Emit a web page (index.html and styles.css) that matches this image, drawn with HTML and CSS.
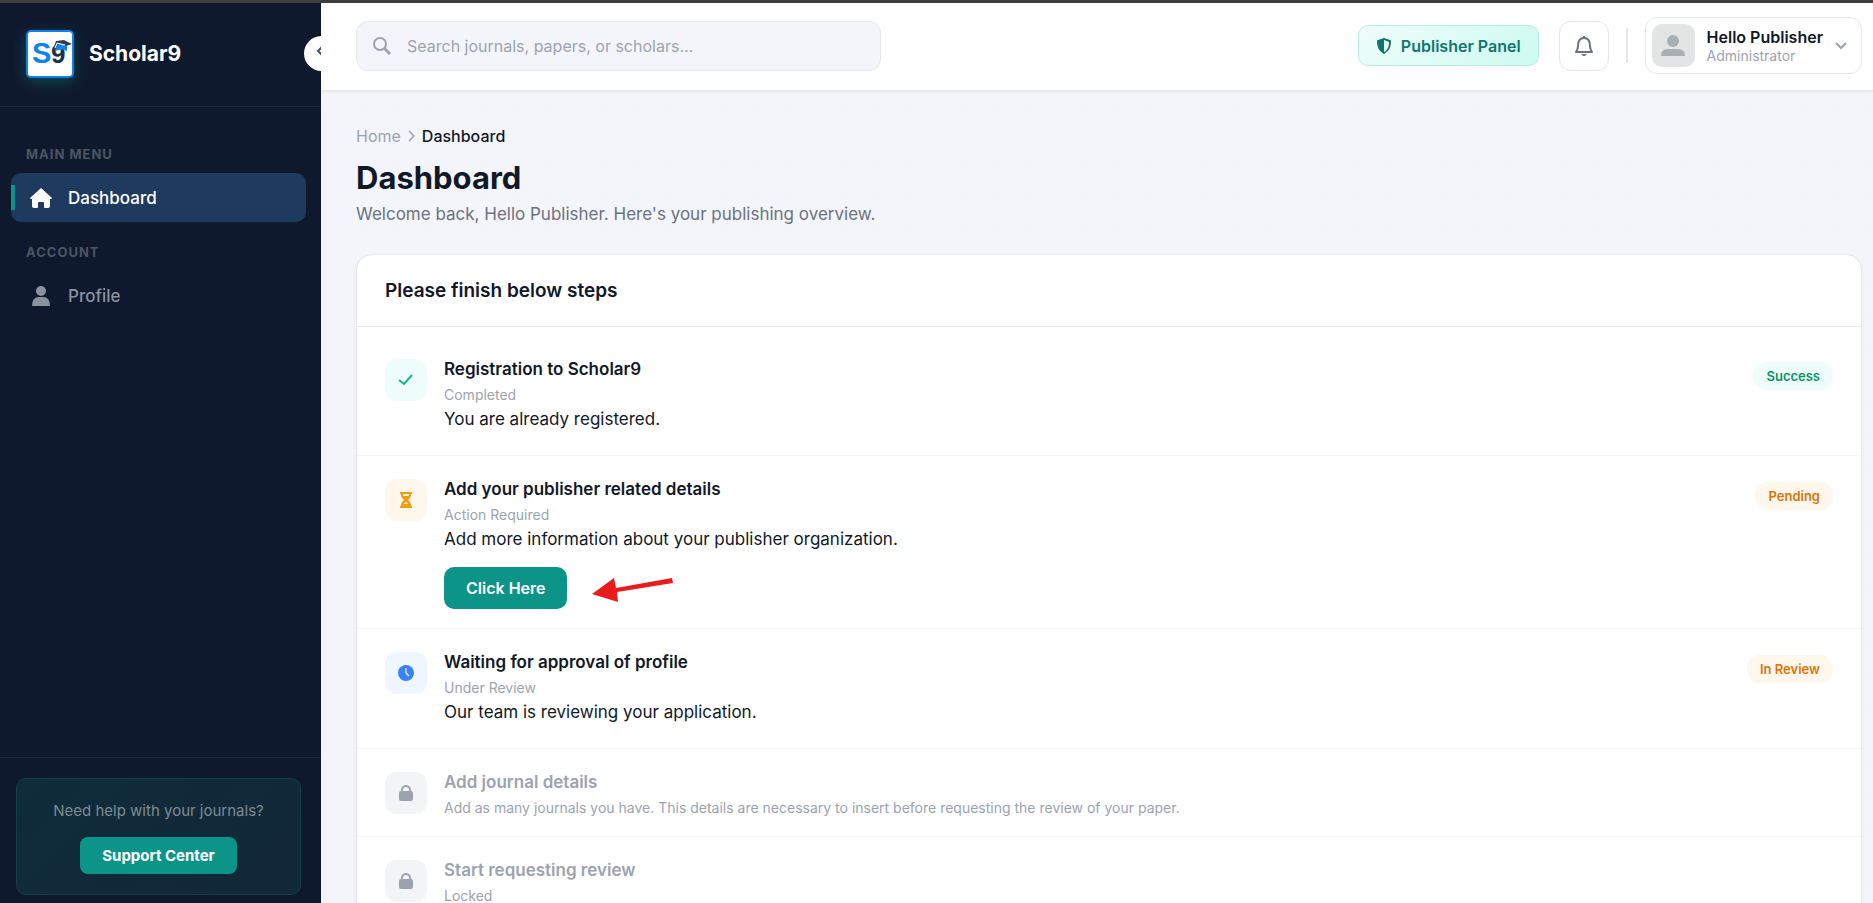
FILE: index.html
```
<!DOCTYPE html>
<html lang="en">
<head>
    <meta charset="UTF-8">
    <meta name="viewport" content="width=device-width, initial-scale=1.0">
    <title>Dashboard - Scholar9</title>
    <link rel="stylesheet" href="styles.css">
</head>
<body>
    <aside class="sidebar">
        <button class="sidebar-toggle" type="button" aria-label="Collapse menu">
            <svg width="8" height="12" viewBox="0 0 8 12"><path d="M6 2L2 6l4 4" fill="none" stroke="currentColor" stroke-width="2"/></svg>
        </button>
        <div class="brand">
            <div class="brand-logo">
                <svg width="44" height="44" viewBox="0 0 44 44">
                    <text x="4" y="31" class="logo-s">S</text>
                    <text x="23" y="31" class="logo-nine">9</text>
                    <path d="M28 11q5 3 11 3v5q-5-3-12 0z" fill="#0a84f0"/>
                    <path d="M25 17l3-8 8-1 8 4-6 2-8-2-2 1-1 6z" fill="#2c3e50"/>
                    <path d="M27 16l2-5 8 2" fill="none" stroke="#fff" stroke-width="1"/>
                </svg>
            </div>
            <span class="brand-name">Scholar9</span>
        </div>
        <nav class="menu">
            <div class="menu-label">Main Menu</div>
            <a href="#" class="menu-item active">
                <svg width="24" height="24" viewBox="0 0 24 24"><path d="M12 2L1 12q0 1 1 1h1v7q0 2 2 2h3q1 0 1-1v-4q0-1 1-1h4q1 0 1 1v4q0 1 1 1h3q2 0 2-2v-7h1q1 0 1-1z" fill="currentColor"/></svg>
                Dashboard
            </a>
            <div class="menu-label">Account</div>
            <a href="#" class="menu-item">
                <svg width="24" height="24" viewBox="0 0 24 24"><circle cx="12" cy="7" r="5" fill="currentColor"/><path d="M3 22q0-9 7-9h4q7 0 7 9z" fill="currentColor"/></svg>
                Profile
            </a>
        </nav>
        <div class="sidebar-footer">
            <div class="help-box">
                <p>Need help with your journals?</p>
                <button class="support-btn" type="button">Support Center</button>
            </div>
        </div>
    </aside>

    <div class="main">
        <header class="topbar">
            <label class="search">
                <svg width="18" height="18" viewBox="0 0 18 18" fill="none" stroke="currentColor" stroke-width="2"><circle cx="7" cy="7" r="6"/><path d="M11 11l6 6" stroke-width="3"/></svg>
                <input type="text" placeholder="Search journals, papers, or scholars..." aria-label="Search">
            </label>
            <div class="topbar-right">
                <button class="panel-btn" type="button">
                    <svg width="16" height="16" viewBox="0 0 16 16"><path fill-rule="evenodd" d="M8 0l6 2q1 0 1 1c0 6-2 10-7 13C3 13 1 9 1 3q0-1 1-1zM8 2v12c4-2 5-6 5-10z" fill="currentColor"/></svg>
                    Publisher Panel
                </button>
                <button class="bell-btn" type="button" aria-label="Notifications">
                    <svg width="20" height="22" viewBox="0 0 20 22"><path d="M10 1v2M2 17q2-3 2-6c0-5 2-8 6-8s6 3 6 8q0 3 2 6z" fill="none" stroke="currentColor" stroke-width="2" stroke-linejoin="round"/><path d="M7 19h6q-1 2-3 2t-3-2z" fill="currentColor"/></svg>
                </button>
                <span class="divider"></span>
                <button class="user" type="button">
                    <svg class="avatar" width="43" height="43" viewBox="0 0 43 43"><circle cx="21" cy="17" r="6" fill="#a9b0b3"/><path d="M9 32q0-7 7-7h10q7 0 7 7z" fill="#a9b0b3"/></svg>
                    <span class="user-info">
                        <span class="user-name">Hello Publisher</span>
                        <span class="user-role">Administrator</span>
                    </span>
                    <svg width="12" height="8" viewBox="0 0 12 8"><path d="M1 1l5 5 5-5" fill="none" stroke="#9ca3af" stroke-width="2"/></svg>
                </button>
            </div>
        </header>

        <main class="content">
            <div class="breadcrumb">
                <a href="#">Home</a>
                <svg width="7" height="12" viewBox="0 0 7 12"><path d="M1 1l5 5-5 5" fill="none" stroke="#9ca3af" stroke-width="1.5"/></svg>
                <span>Dashboard</span>
            </div>
            <h1>Dashboard</h1>
            <p class="subtitle">Welcome back, Hello Publisher. Here's your publishing overview.</p>

            <section class="card">
                <h2>Please finish below steps</h2>
                <div class="steps">
                    <div class="step">
                        <div class="step-icon green">
                            <svg width="16" height="14" viewBox="0 0 16 14"><path d="M1 7l5 4 8-9" fill="none" stroke="currentColor" stroke-width="2"/></svg>
                        </div>
                        <div class="step-body">
                            <h3>Registration to Scholar9</h3>
                            <div class="step-status">Completed</div>
                            <p>You are already registered.</p>
                        </div>
                        <span class="badge success">Success</span>
                    </div>
                    <div class="step">
                        <div class="step-icon orange">
                            <svg width="12" height="16" viewBox="0 0 12 16"><path fill-rule="evenodd" d="M0 0h12v2h-1c0 3-1 4-3 6 2 2 3 3 3 6h1v2H0v-2h1c0-3 1-4 3-6-2-2-3-3-3-6H0zM3 2q0 2 1 2h4q1 0 1-2zM4 12h4q-1-2-2-2t-2 2z" fill="currentColor"/></svg>
                        </div>
                        <div class="step-body">
                            <h3>Add your publisher related details</h3>
                            <div class="step-status">Action Required</div>
                            <p>Add more information about your publisher organization.</p>
                            <div class="step-action">
                                <button class="click-btn" type="button">Click Here</button>
                                <svg width="82" height="30" viewBox="0 -4 82 30"><path d="M1 17L23 1l2 10L81 1l1 5-56 9 1 10z" fill="#e81c1c"/></svg>
                            </div>
                        </div>
                        <span class="badge warning">Pending</span>
                    </div>
                    <div class="step">
                        <div class="step-icon blue">
                            <svg width="16" height="16" viewBox="0 0 16 16"><circle cx="8" cy="8" r="8" fill="currentColor"/><path d="M8 3v5l3 3" fill="none" stroke="#eff6ff" stroke-width="1.2"/></svg>
                        </div>
                        <div class="step-body">
                            <h3>Waiting for approval of profile</h3>
                            <div class="step-status">Under Review</div>
                            <p>Our team is reviewing your application.</p>
                        </div>
                        <span class="badge warning">In Review</span>
                    </div>
                    <div class="step locked">
                        <div class="step-icon">
                            <svg width="16" height="16" viewBox="0 0 16 16"><path d="M4 7V5a4 4 0 0 1 8 0v2" fill="none" stroke="currentColor" stroke-width="2"/><rect x="1" y="6" width="14" height="10" rx="2" fill="currentColor"/></svg>
                        </div>
                        <div class="step-body">
                            <h3>Add journal details</h3>
                            <div class="step-status">Add as many journals you have. This details are necessary to insert before requesting the review of your paper.</div>
                        </div>
                    </div>
                    <div class="step locked">
                        <div class="step-icon">
                            <svg width="16" height="16" viewBox="0 0 16 16"><path d="M4 7V5a4 4 0 0 1 8 0v2" fill="none" stroke="currentColor" stroke-width="2"/><rect x="1" y="6" width="14" height="10" rx="2" fill="currentColor"/></svg>
                        </div>
                        <div class="step-body">
                            <h3>Start requesting review</h3>
                            <div class="step-status">Locked</div>
                        </div>
                    </div>
                </div>
            </section>
        </main>
    </div>
</body>
</html>
```
FILE: styles.css
```
* {
    box-sizing: border-box;
}

body {
    margin: 0;
    height: 100vh;
    overflow: hidden;
    display: flex;
    border-top: 3px solid #3d3d3d;
    background: #f4f5fa;
    color: #111827;
    font-family: Inter, sans-serif;
    font-size: 16px;
    line-height: 24px;
}

h1, h2, h3, p {
    margin: 0;
}

a {
    text-decoration: none;
}

button {
    font-family: inherit;
    cursor: pointer;
}

/* Sidebar */
.sidebar {
    position: relative;
    flex: 0 0 321px;
    display: flex;
    flex-direction: column;
    overflow: hidden;
    background: #0f192d;
}

.sidebar-toggle {
    position: absolute;
    top: 33px;
    right: -18px;
    width: 35px;
    height: 35px;
    padding: 0 0 4px 12px;
    border: none;
    border-radius: 50%;
    background: #fff;
    color: #4b5563;
    text-align: left;
}

.brand {
    display: flex;
    align-items: center;
    gap: 15px;
    height: 104px;
    padding: 0 26px 2px;
    border-bottom: 1px solid #1c273b;
}

.brand-logo {
    width: 48px;
    height: 48px;
    border: 2px solid #0a84f0;
    border-radius: 5px;
    background: #fff;
    box-shadow: 0 4px 14px rgba(13, 148, 136, 0.4);
}

.brand-logo svg {
    display: block;
}

.logo-s, .logo-nine {
    font-family: "Liberation Sans", sans-serif;
    font-size: 29px;
    font-weight: bold;
    fill: #0a84f0;
}

.logo-nine {
    font-size: 26px;
    fill: #17324d;
}

.brand-name {
    color: #fff;
    font-size: 21px;
    font-weight: 700;
}

.menu {
    flex: 1;
    padding: 35px 15px 0 11px;
}

.menu-label {
    margin: 0 15px 7px;
    color: #4b5563;
    font-size: 13px;
    font-weight: 700;
    letter-spacing: 1px;
    text-transform: uppercase;
}

.menu-item {
    display: flex;
    align-items: center;
    gap: 15px;
    height: 49px;
    margin-bottom: 18px;
    padding: 0 18px;
    border-radius: 10px;
    color: #8b929d;
    font-size: 17px;
    font-weight: 500;
}

.menu-item.active {
    background: linear-gradient(#0d9488, #0d9488) left center / 4px 25px no-repeat, #1e3a5f;
    color: #fff;
}

.sidebar-footer {
    padding: 20px 20px 8px 16px;
    border-top: 1px solid #1c273b;
}

.help-box {
    padding: 20px 16px;
    border: 1px solid #114047;
    border-radius: 10px;
    background: linear-gradient(135deg, #0f2c3b, #122737);
    text-align: center;
}

.help-box p {
    margin-bottom: 14px;
    color: #7f8a93;
    font-size: 15px;
}

.support-btn {
    height: 37px;
    padding: 0 22px;
    border: none;
    border-radius: 8px;
    background: #0d9488;
    color: #fff;
    font-size: 15px;
    font-weight: 700;
}

/* Top bar */
.main {
    flex: 1;
    min-width: 0;
}

.topbar {
    display: flex;
    align-items: center;
    justify-content: space-between;
    height: 88px;
    padding: 0 11px 2px 35px;
    border-bottom: 1px solid #e5e7eb;
    background: #fff;
    box-shadow: 0 1px 3px rgba(0, 0, 0, 0.06);
}

.search {
    display: flex;
    align-items: center;
    gap: 14px;
    width: 525px;
    height: 50px;
    padding: 0 16px;
    border: 1px solid #e5e7eb;
    border-radius: 12px;
    background: #f4f5fa;
    color: #9ca3af;
}

.search input {
    flex: 1;
    border: none;
    outline: none;
    background: none;
    font-family: inherit;
    font-size: 16px;
}

.search input::placeholder {
    color: #9ca3af;
}

.topbar-right {
    display: flex;
    align-items: center;
}

.panel-btn {
    display: flex;
    align-items: center;
    gap: 9px;
    height: 41px;
    margin-right: 20px;
    padding: 0 17px;
    border: 1px solid #b2efe2;
    border-radius: 10px;
    background: linear-gradient(135deg, #f0fdfa, #ccfbf1);
    color: #0f766e;
    font-size: 16px;
    font-weight: 600;
}

.bell-btn {
    display: flex;
    align-items: center;
    justify-content: center;
    width: 50px;
    height: 50px;
    border: 1px solid #e5e7eb;
    border-radius: 12px;
    background: #fff;
    color: #6b7280;
}

.divider {
    width: 2px;
    height: 35px;
    margin: 0 17px;
    background: #e5e7eb;
}

.user {
    display: flex;
    align-items: center;
    gap: 12px;
    height: 57px;
    padding: 0 14px 0 6px;
    border: 1px solid #e5e7eb;
    border-radius: 12px;
    background: #fff;
    text-align: left;
}

.avatar {
    border-radius: 10px;
    background: #e2e5e4;
}

.user-name, .user-role {
    display: block;
}

.user-name {
    color: #111827;
    font-size: 16px;
    font-weight: 600;
    line-height: 20px;
}

.user-role {
    color: #9ca3af;
    font-size: 14px;
    line-height: 18px;
}

/* Content */
.content {
    height: 100%;
    padding: 33px 11px 0 35px;
    background-image: radial-gradient(#f0f2f7 1px, transparent 1px);
    background-size: 30px 30px;
}

.breadcrumb {
    display: flex;
    align-items: center;
    gap: 7px;
    font-size: 16px;
}

.breadcrumb a {
    color: #9ca3af;
}

.breadcrumb span {
    font-weight: 500;
}

h1 {
    margin-top: 10px;
    font-size: 31px;
    line-height: 40px;
}

.subtitle {
    margin: 4px 0 28px;
    color: #6b7280;
    font-size: 17px;
}

.card {
    border: 1px solid #e5e7eb;
    border-radius: 16px 16px 0 0;
    background: #fff;
    box-shadow: 0 1px 3px rgba(0, 0, 0, 0.06);
}

.card h2 {
    padding: 23px 28px;
    border-bottom: 1px solid #e5e7eb;
    font-size: 19px;
    font-weight: 600;
    line-height: 25px;
}

.steps {
    padding-top: 9px;
}

.step {
    display: flex;
    align-items: flex-start;
    padding: 20px 28px 19px;
    border-bottom: 1px solid #f3f4f6;
}

.step-icon {
    display: flex;
    align-items: center;
    justify-content: center;
    width: 42px;
    height: 42px;
    margin: 3px 17px 0 0;
    border-radius: 12px;
    background: #f3f4f6;
    color: #9ca3af;
}

.step-icon.green {
    background: #effdfa;
    color: #10b981;
}

.step-icon.orange {
    background: #fff6ec;
    color: #f59e0b;
}

.step-icon.blue {
    background: #eff6ff;
    color: #3b82f6;
}

.step-body {
    flex: 1;
}

.step h3 {
    margin-bottom: 4px;
    font-size: 17px;
    font-weight: 600;
    line-height: 26px;
}

.step-status {
    color: #9ca3af;
    font-size: 14px;
    line-height: 18px;
}

.step p {
    margin: 3px 0 5px;
    font-size: 17px;
}

.step.locked h3 {
    color: #9ca3af;
}

.step-action {
    display: flex;
    align-items: center;
    gap: 24px;
    margin-top: 16px;
}

.click-btn {
    height: 42px;
    padding: 0 22px;
    border: none;
    border-radius: 10px;
    background: #0d9488;
    color: #fff;
    font-size: 16px;
    font-weight: 600;
}

.badge {
    margin-top: 6px;
    padding: 0 13px;
    border-radius: 14px;
    font-size: 13px;
    font-weight: 600;
    line-height: 28px;
}

.badge.success {
    background: #effdfa;
    color: #059669;
}

.badge.warning {
    background: #fff6ec;
    color: #d97706;
}
```
